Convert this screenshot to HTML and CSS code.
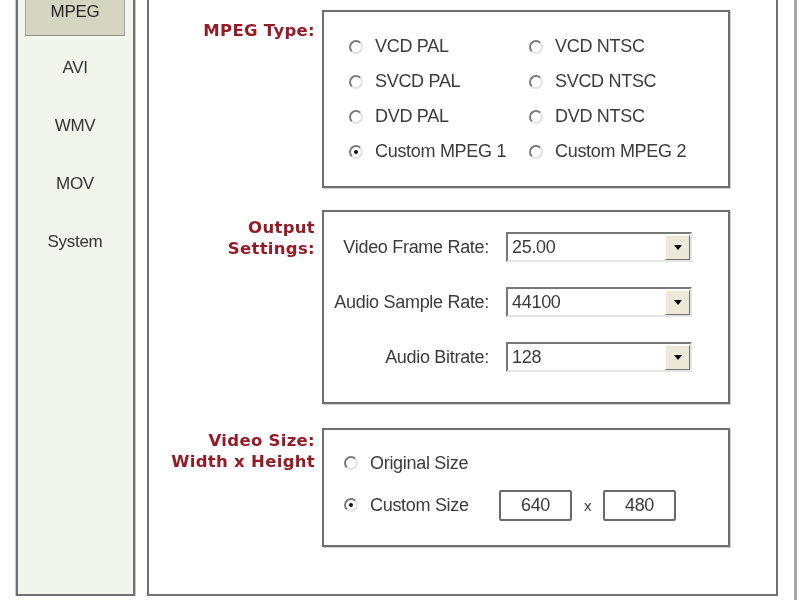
FILE: index.html
```html
<!DOCTYPE html>
<html lang="en">
<head>
    <meta charset="UTF-8">
    <title>Export Settings - MPEG</title>
    <link rel="stylesheet" href="styles.css">
</head>
<body>
    <div class="window">
        <!-- Format list -->
        <nav class="sidebar">
            <div class="tab tab-active">MPEG</div>
            <div class="tab">AVI</div>
            <div class="tab">WMV</div>
            <div class="tab">MOV</div>
            <div class="tab">System</div>
        </nav>

        <!-- MPEG settings -->
        <main class="panel">
            <section class="group">
                <h2 class="group-title title-type">MPEG Type:</h2>
                <div class="group-box type-box">
                    <label class="option"><span class="radio"></span>VCD PAL</label>
                    <label class="option"><span class="radio"></span>VCD NTSC</label>
                    <label class="option"><span class="radio"></span>SVCD PAL</label>
                    <label class="option"><span class="radio"></span>SVCD NTSC</label>
                    <label class="option"><span class="radio"></span>DVD PAL</label>
                    <label class="option"><span class="radio"></span>DVD NTSC</label>
                    <label class="option"><span class="radio checked"></span>Custom MPEG 1</label>
                    <label class="option"><span class="radio"></span>Custom MPEG 2</label>
                </div>
            </section>

            <section class="group group-output">
                <h2 class="group-title title-output">Output<br>Settings:</h2>
                <div class="group-box output-box">
                    <div class="setting">
                        <span class="setting-label">Video Frame Rate:</span>
                        <div class="combo"><span class="combo-value">25.00</span><span class="combo-btn"></span></div>
                    </div>
                    <div class="setting">
                        <span class="setting-label">Audio Sample Rate:</span>
                        <div class="combo"><span class="combo-value">44100</span><span class="combo-btn"></span></div>
                    </div>
                    <div class="setting">
                        <span class="setting-label">Audio Bitrate:</span>
                        <div class="combo"><span class="combo-value">128</span><span class="combo-btn"></span></div>
                    </div>
                </div>
            </section>

            <section class="group">
                <h2 class="group-title title-size">Video Size:<br>Width x Height</h2>
                <div class="group-box size-box">
                    <div class="size-row">
                        <label class="option size-option"><span class="radio"></span>Original Size</label>
                    </div>
                    <div class="size-row">
                        <label class="option size-option"><span class="radio checked"></span>Custom Size</label>
                        <span class="size-input">640</span>
                        <span class="size-x">x</span>
                        <span class="size-input">480</span>
                    </div>
                </div>
            </section>
        </main>

        <div class="edge"></div>
    </div>
</body>
</html>
```

FILE: styles.css
```css
* { box-sizing: border-box; }
body {
    margin: 0;
    padding: 0;
    background-color: #ffffff;
    font-family: 'Liberation Sans', Arial, sans-serif;
    font-size: 18px;
    letter-spacing: -0.3px;
    color: #3b3b3b;
}
.window {
    display: flex;
    height: 600px;
    padding-left: 16px;
    filter: blur(0.35px);
}

/* left column of formats */
.sidebar {
    width: 119px;
    height: 596px;
    background-color: #f1f5ec;
    border: 2px solid #717171;
    border-top: none;
    box-shadow: 1px 0 0 #c9c9c9, -1px 0 0 #c9c9c9;
    padding-left: 7px;
}
.tab {
    width: 100px;
    height: 58px;
    line-height: 58px;
    text-align: center;
    font-size: 17px;
    color: #333;
}
.tab-active {
    height: 36px;
    line-height: 22px;
    padding-top: 1px;
    margin-bottom: 3px;
    background-color: #d5d6c2;
    border: 1px solid #a6a795;
    border-top: none;
    border-bottom-color: #8f907f;
    color: #262626;
}

/* main settings panel */
.panel {
    width: 631px;
    height: 596px;
    margin-left: 12px;
    border: 2px solid #717171;
    border-top: none;
    padding-top: 10px;
}
.edge {
    width: 5px;
    height: 600px;
    margin-left: 16px;
    border-left: 3px solid #a8a8a8;
}
.group {
    display: flex;
    gap: 7px;
    margin-bottom: 22px;
}
.group-output { margin-bottom: 24px; }
.group-title {
    width: 166px;
    margin: 0;
    text-align: right;
    font-family: 'DejaVu Sans', Verdana, sans-serif;
    font-size: 16.5px;
    font-weight: bold;
    letter-spacing: 0.3px;
    line-height: 21px;
    color: #951b27;
}
.title-type { padding-top: 10px; }
.title-output { padding-top: 7px; }
.title-size { padding-top: 2px; }
.group-box {
    width: 408px;
    border: 2px solid #6e6e6e;
    box-shadow: 1px 1px 0 #cfcfcf;
}

/* radio buttons */
.option {
    display: flex;
    align-items: center;
    gap: 12px;
    white-space: nowrap;
}
.radio {
    position: relative;
    width: 14px;
    height: 14px;
    flex: none;
    border-radius: 50%;
    border: 2px solid;
    border-color: #7a7a7a #e2e2e2 #e2e2e2 #7a7a7a;
}
.radio.checked::after {
    content: "";
    position: absolute;
    left: 3px;
    top: 3px;
    width: 4px;
    height: 4px;
    border-radius: 50%;
    background-color: #111;
}

.type-box {
    height: 178px;
    display: grid;
    grid-template-columns: 180px 1fr;
    grid-auto-rows: 35px;
    padding: 17px 0 0 25px;
}

/* drop-down rows */
.output-box {
    height: 194px;
    display: flex;
    flex-direction: column;
    gap: 25px;
    padding-top: 20px;
}
.setting {
    display: flex;
    align-items: center;
    gap: 17px;
    height: 30px;
}
.setting-label {
    width: 165px;
    text-align: right;
}
.combo {
    display: flex;
    width: 186px;
    height: 30px;
    border: 2px solid;
    border-color: #777777 #e4e4e4 #e4e4e4 #777777;
    background-color: #fff;
}
.combo-value {
    flex: 1;
    padding-left: 4px;
    line-height: 26px;
}
.combo-btn {
    width: 25px;
    margin: 1px 0 0;
    background-color: #ece9d8;
    border: 1px solid;
    border-color: #fbfbf5 #6f6f6f #6f6f6f #fbfbf5;
    display: flex;
    align-items: center;
    justify-content: center;
}
.combo-btn::before {
    content: "";
    border-left: 4px solid transparent;
    border-right: 4px solid transparent;
    border-top: 5px solid #000;
}

/* size fields */
.size-box {
    height: 119px;
    display: flex;
    flex-direction: column;
    gap: 12px;
    padding: 18px 0 0 20px;
}
.size-row {
    display: flex;
    align-items: center;
    height: 30px;
}
.size-option { width: 155px; }
.size-input {
    width: 73px;
    height: 31px;
    border: 2px solid #6a6a6a;
    border-radius: 2px;
    text-align: center;
    line-height: 27px;
}
.size-x {
    width: 31px;
    text-align: center;
    font-size: 15px;
}
```
